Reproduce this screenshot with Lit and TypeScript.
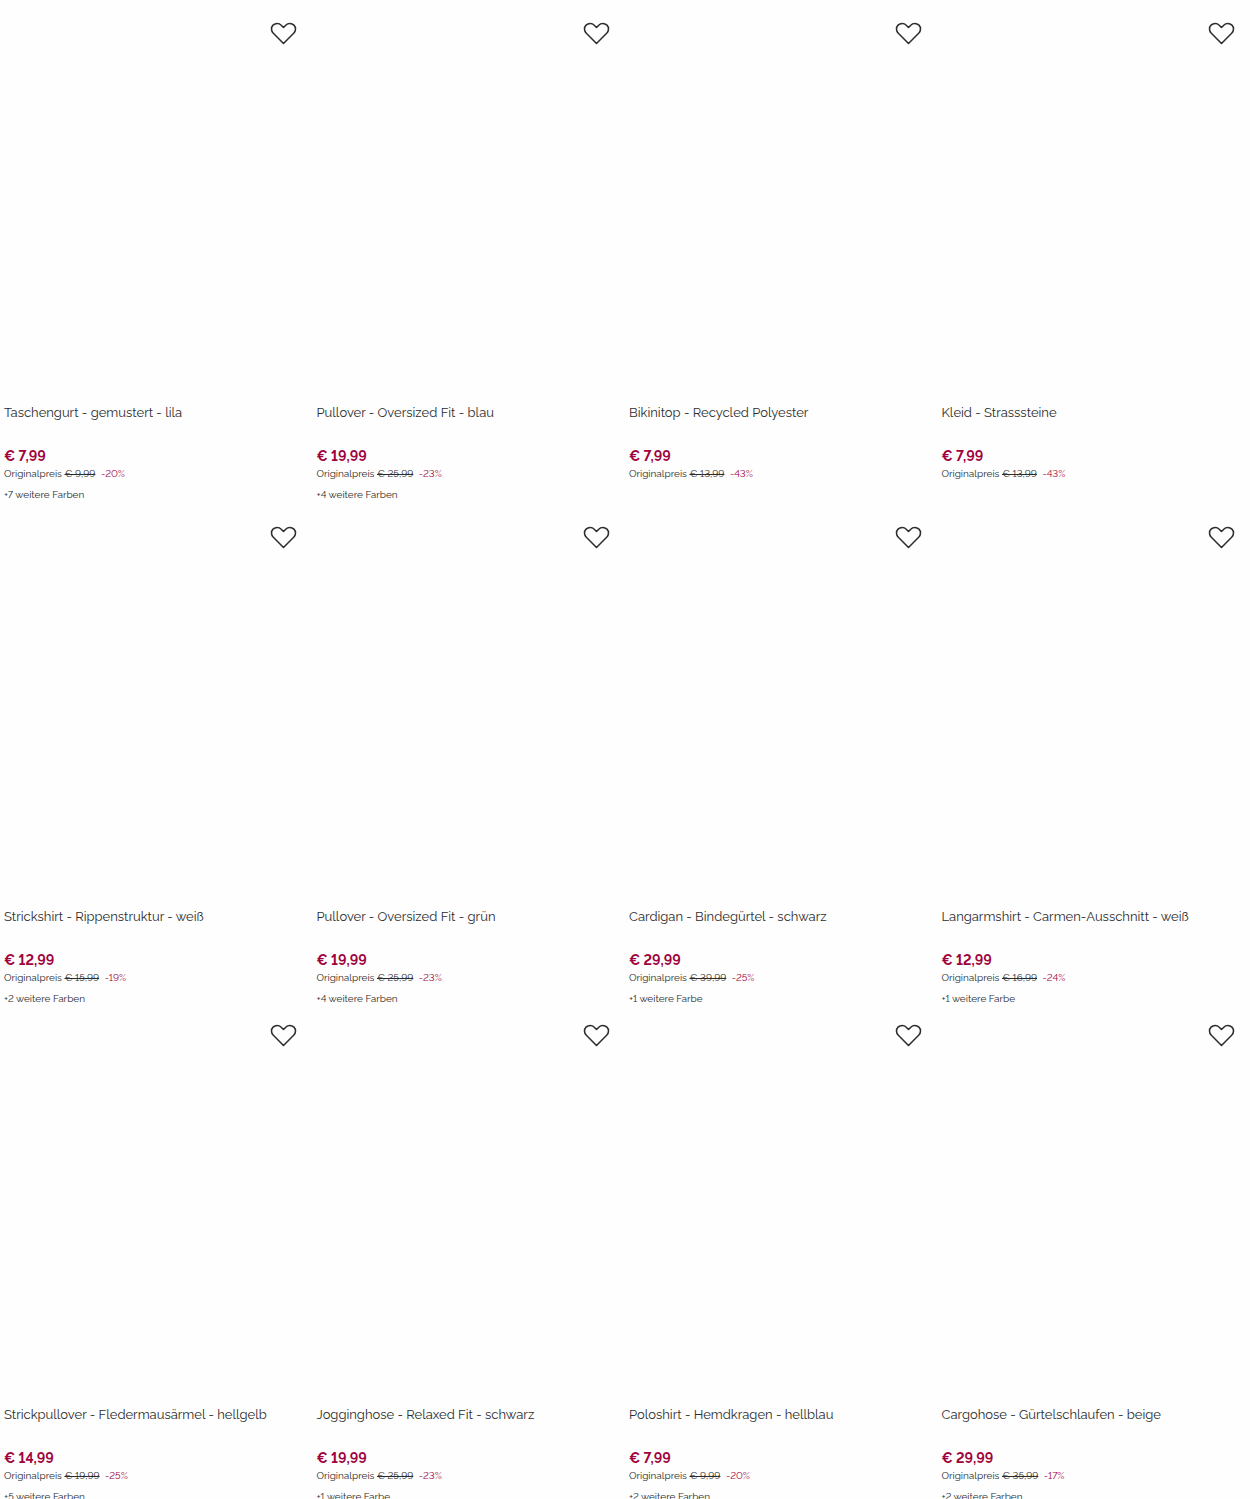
import { LitElement, html, css, nothing } from "lit";
import { customElement, property, state } from "lit/decorators.js";
import { classMap } from "lit/directives/class-map.js";

interface Product {
  name: string;
  price: string;
  original: string;
  discount: string;
  colors?: string;
}

const rows: Product[][] = [
  [
    { name: "Taschengurt - gemustert - lila", price: "€ 7,99", original: "€ 9,99", discount: "-20%", colors: "+7 weitere Farben" },
    { name: "Pullover - Oversized Fit - blau", price: "€ 19,99", original: "€ 25,99", discount: "-23%", colors: "+4 weitere Farben" },
    { name: "Bikinitop - Recycled Polyester", price: "€ 7,99", original: "€ 13,99", discount: "-43%" },
    { name: "Kleid - Strasssteine", price: "€ 7,99", original: "€ 13,99", discount: "-43%" },
  ],
  [
    { name: "Strickshirt - Rippenstruktur - weiß", price: "€ 12,99", original: "€ 15,99", discount: "-19%", colors: "+2 weitere Farben" },
    { name: "Pullover - Oversized Fit - grün", price: "€ 19,99", original: "€ 25,99", discount: "-23%", colors: "+4 weitere Farben" },
    { name: "Cardigan - Bindegürtel - schwarz", price: "€ 29,99", original: "€ 39,99", discount: "-25%", colors: "+1 weitere Farbe" },
    { name: "Langarmshirt - Carmen-Ausschnitt - weiß", price: "€ 12,99", original: "€ 16,99", discount: "-24%", colors: "+1 weitere Farbe" },
  ],
  [
    { name: "Strickpullover - Fledermausärmel - hellgelb", price: "€ 14,99", original: "€ 19,99", discount: "-25%", colors: "+5 weitere Farben" },
    { name: "Jogginghose - Relaxed Fit - schwarz", price: "€ 19,99", original: "€ 25,99", discount: "-23%", colors: "+1 weitere Farbe" },
    { name: "Poloshirt - Hemdkragen - hellblau", price: "€ 7,99", original: "€ 9,99", discount: "-20%", colors: "+2 weitere Farben" },
    { name: "Cargohose - Gürtelschlaufen - beige", price: "€ 29,99", original: "€ 35,99", discount: "-17%", colors: "+2 weitere Farben" },
  ],
];

@customElement("product-card")
export class ProductCard extends LitElement {
  @property({ attribute: false }) product!: Product;
  @state() private saved = false;

  static styles = css`
    :host {
      display: block;
      min-width: 0;
      padding: 0 4px;
    }
    .media {
      position: relative;
      aspect-ratio: 11 / 14;
    }
    .wish {
      position: absolute;
      top: 3px;
      right: 3px;
      display: grid;
      place-items: center;
      width: 44px;
      height: 44px;
      padding: 0;
      border: 0;
      background: none;
      cursor: pointer;
    }
    .heart {
      display: block;
      fill: none;
      stroke: #2d2d2d;
      stroke-width: 1.6;
      stroke-linejoin: round;
    }
    .heart.saved {
      fill: #2d2d2d;
    }
    .name {
      min-height: 40px;
      margin: 7px 0 3px;
      font-size: 13px;
      line-height: 20px;
      font-weight: 400;
    }
    .link {
      color: inherit;
      text-decoration: none;
    }
    .price {
      margin: 0;
      color: #a0043c;
      font-size: 14px;
      line-height: 20px;
      font-weight: 700;
    }
    .was,
    .colors {
      margin: 0;
      font-size: 10px;
      line-height: 16px;
    }
    .colors {
      margin-top: 5px;
    }
    .discount {
      margin-left: 3px;
      color: #a0043c;
    }
  `;

  render() {
    const p = this.product;
    return html`
      <article>
        <div class="media">
          <button
            class="wish"
            type="button"
            aria-label="Auf die Wunschliste"
            aria-pressed=${this.saved ? "true" : "false"}
            @click=${() => (this.saved = !this.saved)}
          >
            <svg class=${classMap({ heart: true, saved: this.saved })} width="27" height="23" viewBox="0 0 28 24" aria-hidden="true">
              <path d="M14 22.4 3.4 11.8C.9 9.3.9 5.5 3.1 3.3c2.4-2.4 6.2-2.4 8.5 0L14 5.8l2.4-2.5c2.3-2.4 6.1-2.4 8.5 0 2.2 2.2 2.2 6-.3 8.5Z" />
            </svg>
          </button>
        </div>
        <h2 class="name"><a class="link" href="#">${p.name}</a></h2>
        <p class="price">${p.price}</p>
        <p class="was">
          Originalpreis <s>${p.original}</s>
          <span class="discount">${p.discount}</span>
        </p>
        ${p.colors ? html`<p class="colors">${p.colors}</p>` : nothing}
      </article>
    `;
  }
}

@customElement("app-root")
export class AppRoot extends LitElement {
  static styles = css`
    :host {
      display: block;
      min-height: 100vh;
      background: #fefefe;
      color: #2d2d2d;
      font-family: Raleway, Lato, "Open Sans", sans-serif;
      font-variant-numeric: lining-nums;
    }
    .list {
      display: flex;
      flex-direction: column;
      gap: 3px;
      padding-top: 8px;
    }
    .row {
      display: grid;
      grid-template-columns: repeat(4, minmax(0, 1fr));
    }
    .row:first-child {
      padding-bottom: 7px;
    }
  `;

  render() {
    return html`
      <main class="list">
        ${rows.map(
          (row) => html`
            <section class="row">
              ${row.map((p) => html`<product-card .product=${p}></product-card>`)}
            </section>
          `
        )}
      </main>
    `;
  }
}
